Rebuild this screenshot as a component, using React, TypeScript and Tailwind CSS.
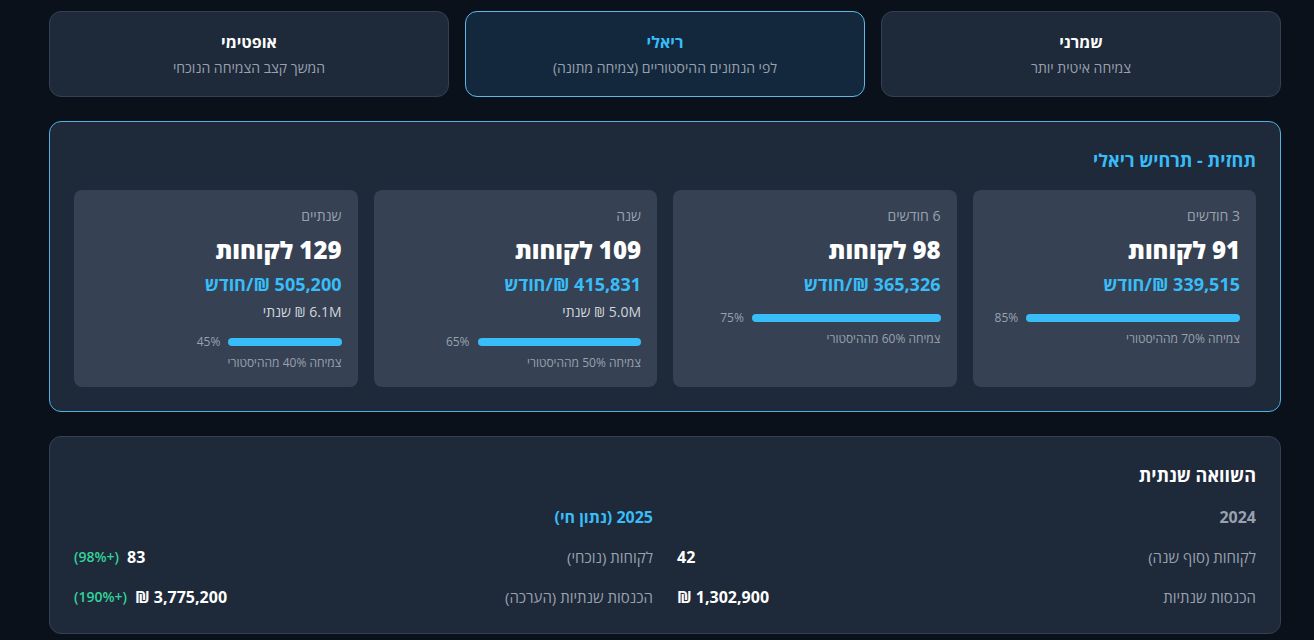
export default function App() {
  const scenarios = [
    { title: 'שמרני', desc: 'צמיחה איטית יותר', active: false },
    { title: 'ריאלי', desc: 'לפי הנתונים ההיסטוריים (צמיחה מתונה)', active: true },
    { title: 'אופטימי', desc: 'המשך קצב הצמיחה הנוכחי', active: false },
  ];

  const forecast = [
    { period: '3 חודשים', customers: 91, monthly: '339,515', annual: null, confidence: 85, growth: 70 },
    { period: '6 חודשים', customers: 98, monthly: '365,326', annual: null, confidence: 75, growth: 60 },
    { period: 'שנה', customers: 109, monthly: '415,831', annual: '5.0M', confidence: 65, growth: 50 },
    { period: 'שנתיים', customers: 129, monthly: '505,200', annual: '6.1M', confidence: 45, growth: 40 },
  ];

  return (
    <div
      dir="rtl"
      className="h-[640px] overflow-hidden bg-[#0b111b] pt-[11px]"
      style={{ fontFamily: '"Open Sans", "DejaVu Sans", sans-serif' }}
    >
      <div className="w-[1232px] mr-[33px]">
        {/* Scenario selector */}
        <div className="grid grid-cols-3 gap-4 mb-6">
          {scenarios.map((s) => (
            <div
              key={s.title}
              className={`rounded-xl border py-[18px] text-center ${
                s.active ? 'bg-[#13283c] border-[#5db8e8]' : 'bg-[#1e2939] border-[#344154]'
              }`}
            >
              <div className={`text-base font-bold leading-6 ${s.active ? 'text-[#38bdf8]' : 'text-white'}`}>
                {s.title}
              </div>
              <div className="mt-1 text-sm leading-5 text-gray-400">{s.desc}</div>
            </div>
          ))}
        </div>

        {/* Forecast */}
        <div className="bg-[#1e2939] border border-[#4fb0e3] rounded-xl p-6 mb-6">
          <h3 className="text-lg font-bold leading-7 text-[#38bdf8] mb-4">תחזית - תרחיש ריאלי</h3>
          <div className="grid grid-cols-4 gap-4">
            {forecast.map((f) => (
              <div key={f.period} className="bg-[#364153] rounded-lg p-4">
                <p className="text-sm leading-5 text-gray-400 mb-2">{f.period}</p>
                <p className="text-2xl leading-8 font-extrabold text-white">{f.customers} לקוחות</p>
                <p className="mt-1 text-lg leading-7 font-bold text-[#38bdf8]">{f.monthly} ₪/חודש</p>
                {f.annual && <p className="mt-1 text-sm leading-5 text-gray-300">{f.annual} ₪ שנתי</p>}
                <div className="mt-3 flex items-center gap-2 h-4">
                  <div className="h-2 rounded-full bg-[#38bdf8]" style={{ width: `${f.confidence}%` }}></div>
                  <span className="text-xs leading-4 text-gray-400">{f.confidence}%</span>
                </div>
                <p className="mt-[5px] text-xs leading-4 text-gray-400">צמיחה {f.growth}% מההיסטורי</p>
              </div>
            ))}
          </div>
        </div>

        {/* Yearly comparison */}
        <div className="bg-[#1e2939] border border-[#344154] rounded-xl p-6">
          <h3 className="text-lg font-bold leading-7 text-white mb-4">השוואה שנתית</h3>
          <div className="grid grid-cols-2 gap-6">
            <div className="flex flex-col gap-4">
              <div className="text-base leading-6 font-bold text-gray-400">2024</div>
              <div className="flex justify-between items-center leading-6">
                <span className="text-[15px] text-gray-400">לקוחות (סוף שנה)</span>
                <span className="font-bold text-white">42</span>
              </div>
              <div className="flex justify-between items-center leading-6">
                <span className="text-[15px] text-gray-400">הכנסות שנתיות</span>
                <span className="font-bold text-white">1,302,900 ₪</span>
              </div>
            </div>
            <div className="flex flex-col gap-4">
              <div className="text-base leading-6 font-bold text-[#38bdf8]">2025 (נתון חי)</div>
              <div className="flex justify-between items-center leading-6">
                <span className="text-[15px] text-gray-400">לקוחות (נוכחי)</span>
                <span className="flex items-center gap-2">
                  <span className="font-bold text-white">83</span>
                  <span className="text-sm font-semibold text-[#34d399]">(+98%)</span>
                </span>
              </div>
              <div className="flex justify-between items-center leading-6">
                <span className="text-[15px] text-gray-400">הכנסות שנתיות (הערכה)</span>
                <span className="flex items-center gap-2">
                  <span className="font-bold text-white">3,775,200 ₪</span>
                  <span className="text-sm font-semibold text-[#34d399]">(+190%)</span>
                </span>
              </div>
            </div>
          </div>
        </div>
      </div>
    </div>
  );
}
